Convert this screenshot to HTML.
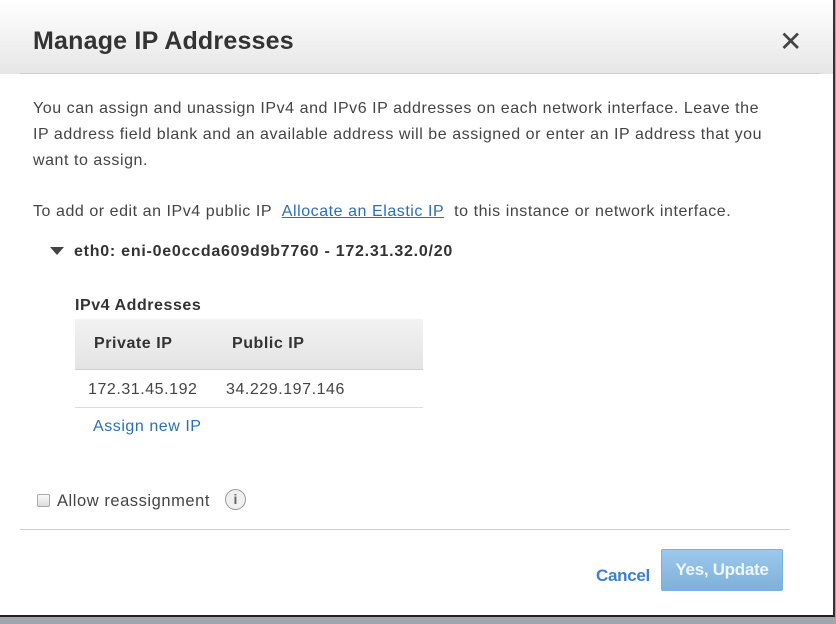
<!DOCTYPE html>
<html><head><style>
body{margin:0;width:836px;height:624px;background:#a2a6aa;font-family:"Liberation Sans",sans-serif;color:#444;position:relative;overflow:hidden}
.dlg{position:absolute;left:0;top:0;width:833px;height:615px;background:#fff;border-right:2px solid #333;border-bottom:2px solid #222}
.hdr{position:absolute;left:0;top:0;width:833px;height:74px;background:linear-gradient(#fff,#e6e6e6)}
.hdr:after{content:"";position:absolute;left:20px;right:12px;bottom:0;height:1px;background:#ccc}
.t{position:absolute;white-space:nowrap;letter-spacing:0.55px}
a{color:#2a6ebb}
</style></head><body>
<div class="dlg">
<div class="hdr"></div>
<div class="t" style="left:33px;top:27px;font-size:25px;font-weight:bold;color:#333;letter-spacing:0.2px">Manage IP Addresses</div>
<div class="t" style="left:779px;top:25px;font-size:28px;color:#444">✕</div>
<div class="t" style="left:33px;top:96px;font-size:16px;line-height:26px">You can assign and unassign IPv4 and IPv6 IP addresses on each network interface. Leave the<br>IP address field blank and an available address will be assigned or enter an IP address that you<br>want to assign.</div>
<div class="t" style="left:33px;top:200px;font-size:16px;line-height:24px">To add or edit an IPv4 public IP &nbsp;<a style="text-decoration:underline">Allocate an Elastic IP</a>&nbsp; to this instance or network interface.</div>
<div class="t" style="left:50px;top:247px;width:0;height:0;border-left:7px solid transparent;border-right:7px solid transparent;border-top:8px solid #444"></div>
<div class="t" style="left:74px;top:243px;font-size:16px;font-weight:bold;color:#333;letter-spacing:0.75px">eth0: eni-0e0ccda609d9b7760 - 172.31.32.0/20</div>
<div class="t" style="left:75px;top:297px;font-size:16px;font-weight:bold;color:#333">IPv4 Addresses</div>
<div class="t" style="left:75px;top:319px;width:348px;height:50px;background:linear-gradient(#f2f2f2,#e4e4e4);border-bottom:1px solid #d0d0d0"></div>
<div class="t" style="left:94px;top:335px;font-size:16px;font-weight:bold;color:#333">Private IP</div>
<div class="t" style="left:232px;top:335px;font-size:16px;font-weight:bold;color:#333">Public IP</div>
<div class="t" style="left:88px;top:381px;font-size:16px">172.31.45.192</div>
<div class="t" style="left:226px;top:381px;font-size:16px">34.229.197.146</div>
<div class="t" style="left:75px;top:407px;width:348px;height:1px;background:#ddd"></div>
<div class="t" style="left:93px;top:418px;font-size:16px;color:#2a6ebb">Assign new IP</div>
<div class="t" style="left:37px;top:494px;width:11px;height:11px;border:1px solid #aaa;border-radius:2px;background:linear-gradient(#fafafa,#ddd)"></div>
<div class="t" style="left:57px;top:492px;font-size:16.5px">Allow reassignment</div>
<div class="t" style="left:225px;top:489px;width:19px;height:19px;border:1px solid #999;border-radius:50%;background:#f0f0f0;text-align:center;font-size:14px;line-height:19px;color:#666;font-weight:bold;letter-spacing:0">i</div>
<div class="t" style="left:20px;top:529px;width:770px;height:1px;background:#ccc"></div>
<div class="t" style="left:596px;top:566px;font-size:17px;font-weight:bold;color:#3b7fd0;letter-spacing:-0.3px">Cancel</div>
<div class="t" style="left:661px;top:549px;width:120px;height:40px;border:1px solid #7ab0ea;border-radius:2px;background:linear-gradient(#9cc9ed,#7fb0d8);color:#eef5fc;font-size:17px;font-weight:bold;text-align:center;line-height:40px;letter-spacing:-0.3px">Yes, Update</div>
</div>
</body></html>
